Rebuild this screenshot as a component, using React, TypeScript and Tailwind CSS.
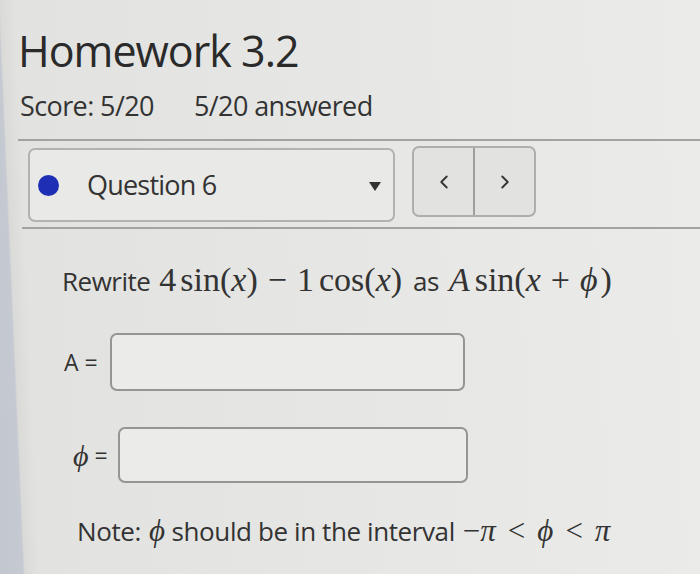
import React from "react";
import { ChevronLeft, ChevronRight } from "lucide-react";

const M = ({ children, className = "" }: { children: React.ReactNode; className?: string }) => (
  <span className={"font-['Liberation_Serif',serif] " + className}>{children}</span>
);
const I = ({ children, className = "" }: { children: React.ReactNode; className?: string }) => (
  <span className={"font-['Liberation_Serif',serif] italic " + className}>{children}</span>
);

export default function App() {
  return (
    <div className="w-[700px] h-[574px] overflow-hidden bg-[linear-gradient(87.5deg,#c2c7d0_0px,#c5c9d1_23px,#dadad8_25px,#e2e2e0_40px,#ebebe9_100%)] text-[#333333] font-['Open_Sans',sans-serif]">
      <div className="pl-[18px] pt-[25px]">
        <h1 className="text-[43px] leading-[52px] text-[#2a2a2a] tracking-[-1px]">Homework 3.2</h1>
        <div className="mt-[12px] flex gap-[40px] text-[27px] leading-[34px] pl-[2px] tracking-[-0.6px]">
          <span>Score: 5/20</span>
          <span>5/20 answered</span>
        </div>
        <div className="mt-[16px] h-[2px] bg-[#a3a3a3]" />
        <div className="mt-[7px] flex items-start gap-[17px] pl-[10px]">
          <div className="flex h-[74px] w-[367px] items-center rounded-[7px] border-2 border-[#b2b2b0] bg-[#e9e9e7] pl-[8px] pr-[12px]">
            <span className="h-[21px] w-[21px] rounded-full bg-[#1f2fb5]" />
            <span className="ml-[28px] text-[27px] tracking-[-0.8px]">Question 6</span>
            <span className="ml-auto mt-[2px] h-0 w-0 border-x-[6px] border-t-[9px] border-x-transparent border-t-[#333333]" />
          </div>
          <div className="-mt-[2px] flex h-[71px] w-[124px] overflow-hidden rounded-[7px] border-2 border-[#aeaeac] bg-[#e2e2e0]">
            <div className="flex flex-1 items-center justify-center border-r-2 border-[#9e9e9c]">
              <ChevronLeft size={22} strokeWidth={2} color="#333" />
            </div>
            <div className="flex flex-1 items-center justify-center">
              <ChevronRight size={22} strokeWidth={2} color="#333" />
            </div>
          </div>
        </div>
        <div className="mt-[5px] ml-[4px] h-[2px] bg-[#a3a3a3]" />
        <div className="mt-[29px] flex items-baseline pl-[44px] text-[26px] leading-[40px] tracking-[-0.5px]">
          <span>Rewrite</span>
          <span className="ml-[9px] text-[34px] tracking-normal">
            <M>4</M>
            <M className="ml-[4px]">sin(</M>
            <I>x</I>
            <M>)</M>
            <M className="mx-[10px]">−</M>
            <M>1</M>
            <M className="ml-[5px]">cos(</M>
            <I>x</I>
            <M>)</M>
          </span>
          <span className="ml-[11px]">as</span>
          <span className="ml-[10px] text-[34px] tracking-normal">
            <I>A</I>
            <M className="ml-[5px]">sin(</M>
            <I>x</I>
            <M className="mx-[10px]">+</M>
            <I>ϕ</I>
            <M className="ml-[3px]">)</M>
          </span>
        </div>
        <div className="mt-[32px] flex items-center pl-[46px]">
          <span className="w-[46px] text-[23px]">A =</span>
          <div className="h-[58px] w-[355px] rounded-[7px] border-2 border-[#959593] bg-[#ebebe9]" />
        </div>
        <div className="mt-[36px] flex items-center pl-[55px]">
          <span className="flex w-[45px] items-center text-[23px]">
            <I className="text-[30px]">ϕ</I>
            <span className="ml-[6px]">=</span>
          </span>
          <div className="h-[56px] w-[350px] rounded-[7px] border-2 border-[#959593] bg-[#ebebe9]" />
        </div>
        <div className="mt-[29px] flex items-baseline pl-[59px] text-[26px] leading-[34px] tracking-[-0.4px]">
          <span>Note:</span>
          <I className="ml-[8px] text-[31px]">ϕ</I>
          <span className="ml-[7px]">should be in the interval</span>
          <span className="ml-[8px] text-[31px] tracking-normal">
            <M>−</M>
            <I>π</I>
            <M className="mx-[12px]">&lt;</M>
            <I>ϕ</I>
            <M className="mx-[12px]">&lt;</M>
            <I>π</I>
          </span>
        </div>
      </div>
    </div>
  );
}
